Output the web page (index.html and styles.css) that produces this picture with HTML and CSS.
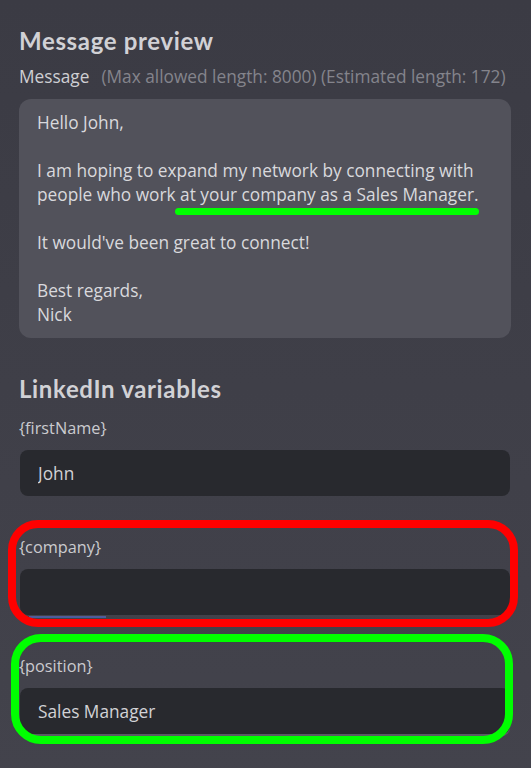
FILE: index.html
```html
<!DOCTYPE html>
<html lang="en">
<head>
<meta charset="utf-8">
<title>Message preview</title>
<link rel="stylesheet" href="styles.css">
</head>
<body>
<main class="page">
  <h1 class="title">Message preview</h1>
  <div class="msg-label">
    <span class="label-main">Message</span><span class="label-hint">(Max allowed length: 8000) (Estimated length: 172)</span>
  </div>
  <div class="preview">
    <p>Hello John,</p>
    <p><span>I am hoping to expand my network by connecting with</span> <span>people who work</span> <span class="hl">at your company as a Sales Manager.</span></p>
    <p>It would've been great to connect!</p>
    <p>Best regards,<br>Nick</p>
  </div>

  <h2 class="title vars-title">LinkedIn variables</h2>
  <div class="fields">
    <div class="field">
      <label class="field-label" for="v-first">{firstName}</label>
      <input class="field-input" id="v-first" type="text" value="John" readonly>
    </div>
    <div class="field field-company">
      <label class="field-label" for="v-company">{company}</label>
      <input class="field-input" id="v-company" type="text" value="" readonly>
      <span class="focus-bar"></span>
    </div>
    <div class="field field-position">
      <label class="field-label" for="v-position">{position}</label>
      <input class="field-input field-input-underlined" id="v-position" type="text" value="Sales Manager" readonly>
    </div>
  </div>
</main>
</body>
</html>
```

FILE: styles.css
```css
html, body {
  margin: 0;
  padding: 0;
}

body {
  min-height: 100vh;
  background: linear-gradient(#3b3b44, #43434c);
  font-family: "Open Sans", "Noto Sans", sans-serif;
  color: #d8d8dc;
}

.page {
  padding: 27px 20px 40px 19px;
}

.title {
  margin: 0;
  font-family: Lato, "Open Sans", sans-serif;
  font-weight: 700;
  font-size: 24px;
  line-height: 28px;
  letter-spacing: 0.65px;
  color: #d1d1d5;
}

.msg-label {
  margin-top: 11px;
  font-size: 17.3px;
  line-height: 22px;
  white-space: nowrap;
}

.label-main {
  color: #cfcfd3;
}

.label-hint {
  margin-left: 12px;
  color: #84848c;
}

.preview {
  margin-top: 11px;
  background: #52525b;
  border-radius: 12px;
  padding: 12px 18px 11px;
  font-size: 17.3px;
  line-height: 24px;
  color: #d9d9dd;
}

.preview p {
  margin: 0;
}

.preview p + p {
  margin-top: 24px;
}

.hl {
  position: relative;
}

.hl::after {
  content: "";
  position: absolute;
  left: -5px;
  right: -1px;
  top: calc(100% + 2px);
  height: 7px;
  border-radius: 4px;
  background: #00ff00;
}

.vars-title {
  margin-top: 37px;
}

.fields {
  margin-top: 15px;
}

.field {
  position: relative;
}

.field + .field {
  margin-top: 41px;
}

.field-label {
  display: block;
  margin-bottom: 12px;
  font-size: 16.3px;
  line-height: 20px;
  color: #cbcbcf;
}

.field-input {
  display: block;
  box-sizing: border-box;
  width: calc(100% - 2px);
  margin: 0 0 0 1px;
  height: 46px;
  padding: 0 18px;
  border: 0;
  border-radius: 8px;
  background: #28292e;
  color: #d2d2d6;
  font-family: "Open Sans", "Noto Sans", sans-serif;
  font-size: 17.3px;
  outline: none;
}

.field-input-underlined {
  box-shadow: 0 2px 0 #5a5a63;
}

.focus-bar {
  position: absolute;
  left: 10px;
  bottom: -2.5px;
  width: 77px;
  height: 1.5px;
  background: #4c5c9c;
}

.field-company::before,
.field-position::before {
  content: "";
  position: absolute;
  z-index: 2;
  border-radius: 30px;
  pointer-events: none;
}

.field-company::before {
  left: -11.5px;
  right: -7px;
  top: -17px;
  bottom: -12px;
  border: 8px solid #ff0000;
}

.field-position::before {
  left: -8px;
  right: -2px;
  top: -22px;
  bottom: -10px;
  border: 8px solid #00ff00;
}
```
